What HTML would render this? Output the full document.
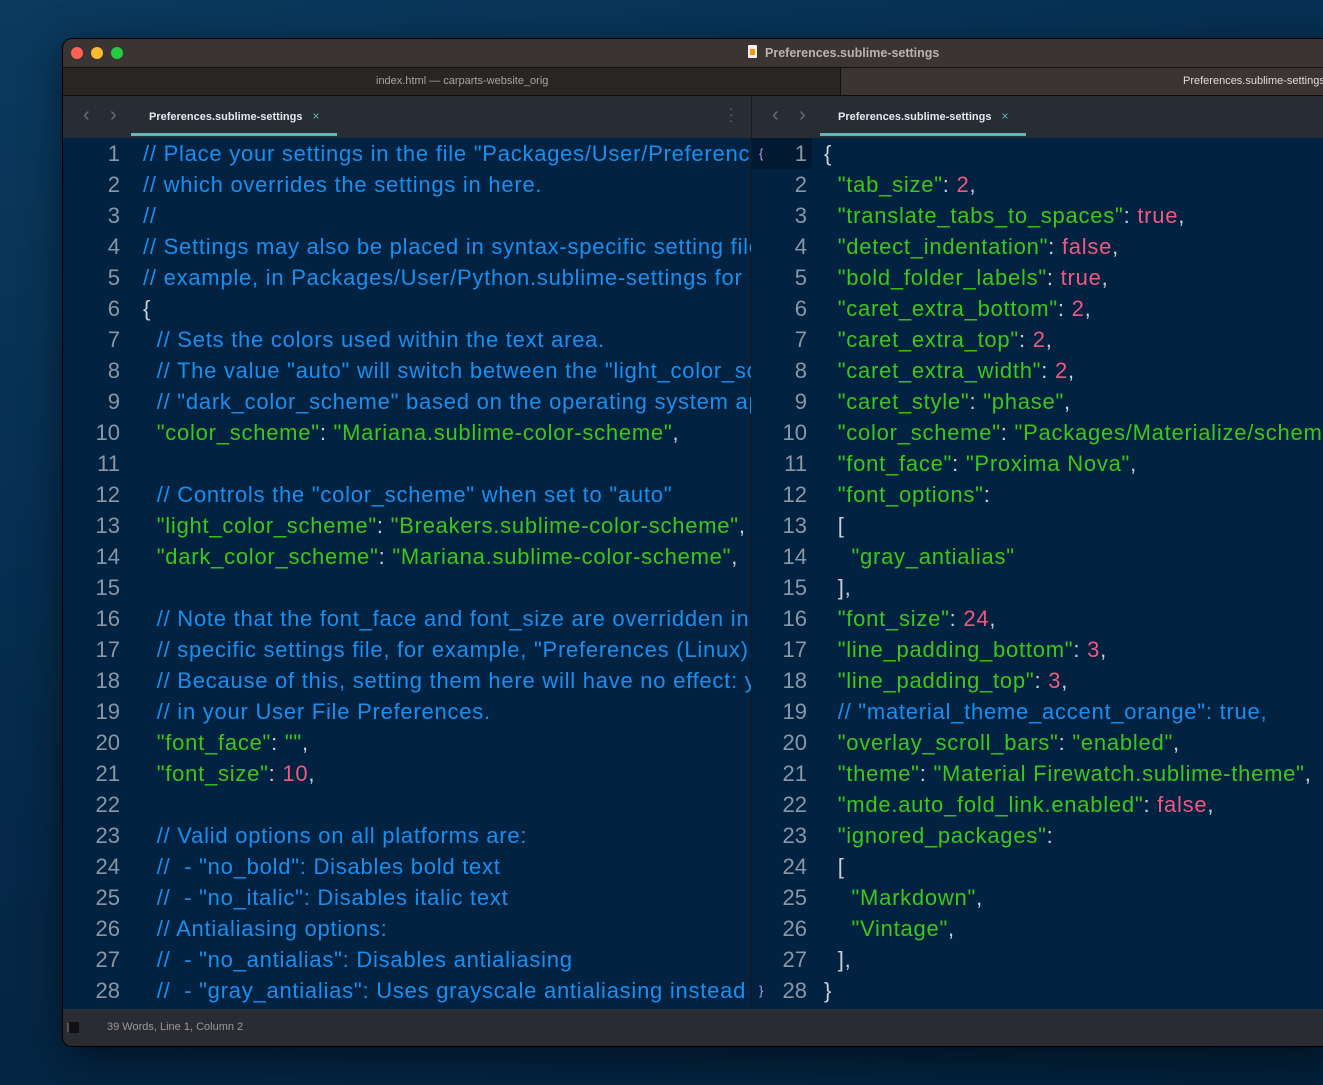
<!DOCTYPE html>
<html><head><style>
body{margin:0;width:1323px;height:1085px;overflow:hidden;background:linear-gradient(160deg,#0a3a5e 0%,#05294a 50%,#032039 100%);font-family:"Liberation Sans",sans-serif;position:relative}
.win{position:absolute;left:63px;top:39px;width:1270px;height:1007px;border-radius:9px;overflow:hidden;background:#012240;box-shadow:0 0 0 1px #000,0 10px 40px rgba(0,0,0,.5)}
.title{position:absolute;left:0;top:0;width:100%;height:28px;background:#3a3433;border-bottom:1px solid #151212}
.dot{position:absolute;top:8px;width:12px;height:12px;border-radius:50%}
.tabs{position:absolute;top:29px;left:0;width:100%;height:27px;background:#3a3433;border-bottom:1px solid #0d0d0d}
.tabs .l{position:absolute;left:0;top:0;width:777px;height:27px;background:#292524;border-right:1px solid #111;color:#a9a4a2;font-size:11px;line-height:26px}
.hdr{position:absolute;top:57px;height:42px;background:#272c35}
.tab{position:absolute;top:0;height:40px;border-bottom:3px solid #5fb8b8;color:#e8e8e8;font-size:11px;line-height:40px;font-weight:bold}
.tab span{color:#5fb8b8;font-weight:normal;margin-left:10px;font-size:12px}
.arr{position:absolute;top:8px;color:#66707c;font-size:20px}
.code{position:absolute;top:99px;height:871px;overflow:hidden;font-size:22px;line-height:31px;white-space:pre}
.ln{position:absolute;top:0;text-align:right;color:#8a97a6}
.tx{position:absolute;top:0;letter-spacing:0.75px}
.c{color:#1b8ff0}.s{color:#3ec71a}.n{color:#f2587f}.p{color:#c8d0d8}
.status{position:absolute;left:0;top:970px;width:100%;height:37px;background:#2a2c31;color:#9a9a9a;font-size:11px;line-height:37px}
</style></head><body>
<div class="win">
<div class="title">
<div class="dot" style="left:8px;background:#fe5f57"></div>
<div class="dot" style="left:28px;background:#febc2e"></div>
<div class="dot" style="left:48px;background:#28c840"></div>
<div style="position:absolute;left:685px;top:6px;width:9px;height:13px;background:#f6f0e6;border-radius:1px"><div style="position:absolute;left:2px;top:4px;width:5px;height:6px;background:#f19a1a"></div></div>
<div style="position:absolute;left:702px;top:0;line-height:28px;color:#b9b4b1;font-size:12.5px;font-weight:bold">Preferences.sublime-settings</div>
</div>
<div class="tabs"><div class="l"><span style="position:absolute;left:313px">index.html — carparts-website_orig</span></div>
<div style="position:absolute;left:1120px;top:0;line-height:26px;color:#e0dcda;font-size:11px">Preferences.sublime-settings</div></div>

<div class="hdr" style="left:0;width:688px">
<div class="arr" style="left:20px">‹</div><div class="arr" style="left:47px">›</div>
<div class="tab" style="left:68px;width:206px;padding-left:18px;box-sizing:border-box">Preferences.sublime-settings<span>×</span></div>
<div style="position:absolute;left:666px;top:9px;color:#6a7380;font-size:14px;line-height:6px">·<br>·<br>·</div>
</div>
<div class="hdr" style="left:689px;width:600px">
<div class="arr" style="left:20px">‹</div><div class="arr" style="left:47px">›</div>
<div class="tab" style="left:68px;width:206px;padding-left:18px;box-sizing:border-box">Preferences.sublime-settings<span>×</span></div>
</div>
<div style="position:absolute;left:688px;top:57px;width:1px;height:913px;background:#121820"></div>

<div class="code" style="left:0;width:688px">
<div class="ln" style="left:0;width:57px">1
2
3
4
5
6
7
8
9
10
11
12
13
14
15
16
17
18
19
20
21
22
23
24
25
26
27
28</div>
<div class="tx" style="left:80px"><span class="c">// Place your settings in the file "Packages/User/Preferences.sublime-settings",
// which overrides the settings in here.
//
// Settings may also be placed in syntax-specific setting files, for
// example, in Packages/User/Python.sublime-settings for python files.</span>
<span class="p">{</span>
<span class="c">  // Sets the colors used within the text area.
  // The value "auto" will switch between the "light_color_scheme" and
  // "dark_color_scheme" based on the operating system appearance.</span>
  <span class="s">"color_scheme"</span><span class="p">: </span><span class="s">"Mariana.sublime-color-scheme"</span><span class="p">,</span>

<span class="c">  // Controls the "color_scheme" when set to "auto"</span>
  <span class="s">"light_color_scheme"</span><span class="p">: </span><span class="s">"Breakers.sublime-color-scheme"</span><span class="p">,</span>
  <span class="s">"dark_color_scheme"</span><span class="p">: </span><span class="s">"Mariana.sublime-color-scheme"</span><span class="p">,</span>

<span class="c">  // Note that the font_face and font_size are overridden in the platform
  // specific settings file, for example, "Preferences (Linux).sublime-settings".
  // Because of this, setting them here will have no effect: you must set them
  // in your User File Preferences.</span>
  <span class="s">"font_face"</span><span class="p">: </span><span class="s">""</span><span class="p">,</span>
  <span class="s">"font_size"</span><span class="p">: </span><span class="n">10</span><span class="p">,</span>

<span class="c">  // Valid options on all platforms are:
  //  - "no_bold": Disables bold text
  //  - "no_italic": Disables italic text
  // Antialiasing options:
  //  - "no_antialias": Disables antialiasing
  //  - "gray_antialias": Uses grayscale antialiasing instead of subpixel</span></div>
</div>

<div class="code" style="left:689px;width:600px">
<div style="position:absolute;left:0;top:0;width:60px;height:31px;background:#011a31"></div>
<div style="position:absolute;left:7px;top:0;color:#b59cf0;font-size:13px">{</div>
<div style="position:absolute;left:7px;top:837px;color:#b59cf0;font-size:13px">}</div>
<div class="ln" style="left:0;width:55px">1
2
3
4
5
6
7
8
9
10
11
12
13
14
15
16
17
18
19
20
21
22
23
24
25
26
27
28</div>
<div class="tx" style="left:72px"><span class="p">{</span>
<span class="s">  "tab_size"</span><span class="p">: </span><span class="n">2</span><span class="p">,</span>
<span class="s">  "translate_tabs_to_spaces"</span><span class="p">: </span><span class="n">true</span><span class="p">,</span>
<span class="s">  "detect_indentation"</span><span class="p">: </span><span class="n">false</span><span class="p">,</span>
<span class="s">  "bold_folder_labels"</span><span class="p">: </span><span class="n">true</span><span class="p">,</span>
<span class="s">  "caret_extra_bottom"</span><span class="p">: </span><span class="n">2</span><span class="p">,</span>
<span class="s">  "caret_extra_top"</span><span class="p">: </span><span class="n">2</span><span class="p">,</span>
<span class="s">  "caret_extra_width"</span><span class="p">: </span><span class="n">2</span><span class="p">,</span>
<span class="s">  "caret_style"</span><span class="p">: </span><span class="s">"phase"</span><span class="p">,</span>
<span class="s">  "color_scheme"</span><span class="p">: </span><span class="s">"Packages/Materialize/schemes/Material.tmTheme"</span>
<span class="s">  "font_face"</span><span class="p">: </span><span class="s">"Proxima Nova"</span><span class="p">,</span>
<span class="s">  "font_options"</span><span class="p">:</span>
<span class="p">  [</span>
<span class="s">    "gray_antialias"</span>
<span class="p">  ],</span>
<span class="s">  "font_size"</span><span class="p">: </span><span class="n">24</span><span class="p">,</span>
<span class="s">  "line_padding_bottom"</span><span class="p">: </span><span class="n">3</span><span class="p">,</span>
<span class="s">  "line_padding_top"</span><span class="p">: </span><span class="n">3</span><span class="p">,</span>
<span class="c">  // "material_theme_accent_orange": true,</span>
<span class="s">  "overlay_scroll_bars"</span><span class="p">: </span><span class="s">"enabled"</span><span class="p">,</span>
<span class="s">  "theme"</span><span class="p">: </span><span class="s">"Material Firewatch.sublime-theme"</span><span class="p">,</span>
<span class="s">  "mde.auto_fold_link.enabled"</span><span class="p">: </span><span class="n">false</span><span class="p">,</span>
<span class="s">  "ignored_packages"</span><span class="p">:</span>
<span class="p">  [</span>
<span class="s">    "Markdown"</span><span class="p">,</span>
<span class="s">    "Vintage"</span><span class="p">,</span>
<span class="p">  ],</span>
<span class="p">}</span></div>
</div>

<div class="status"><div style="position:absolute;left:4px;top:13px;width:9px;height:9px;border:1px solid #111;background:#111;border-left:2px solid #555"></div><span style="margin-left:44px">39 Words, Line 1, Column 2</span></div>
</div>
</body></html>
